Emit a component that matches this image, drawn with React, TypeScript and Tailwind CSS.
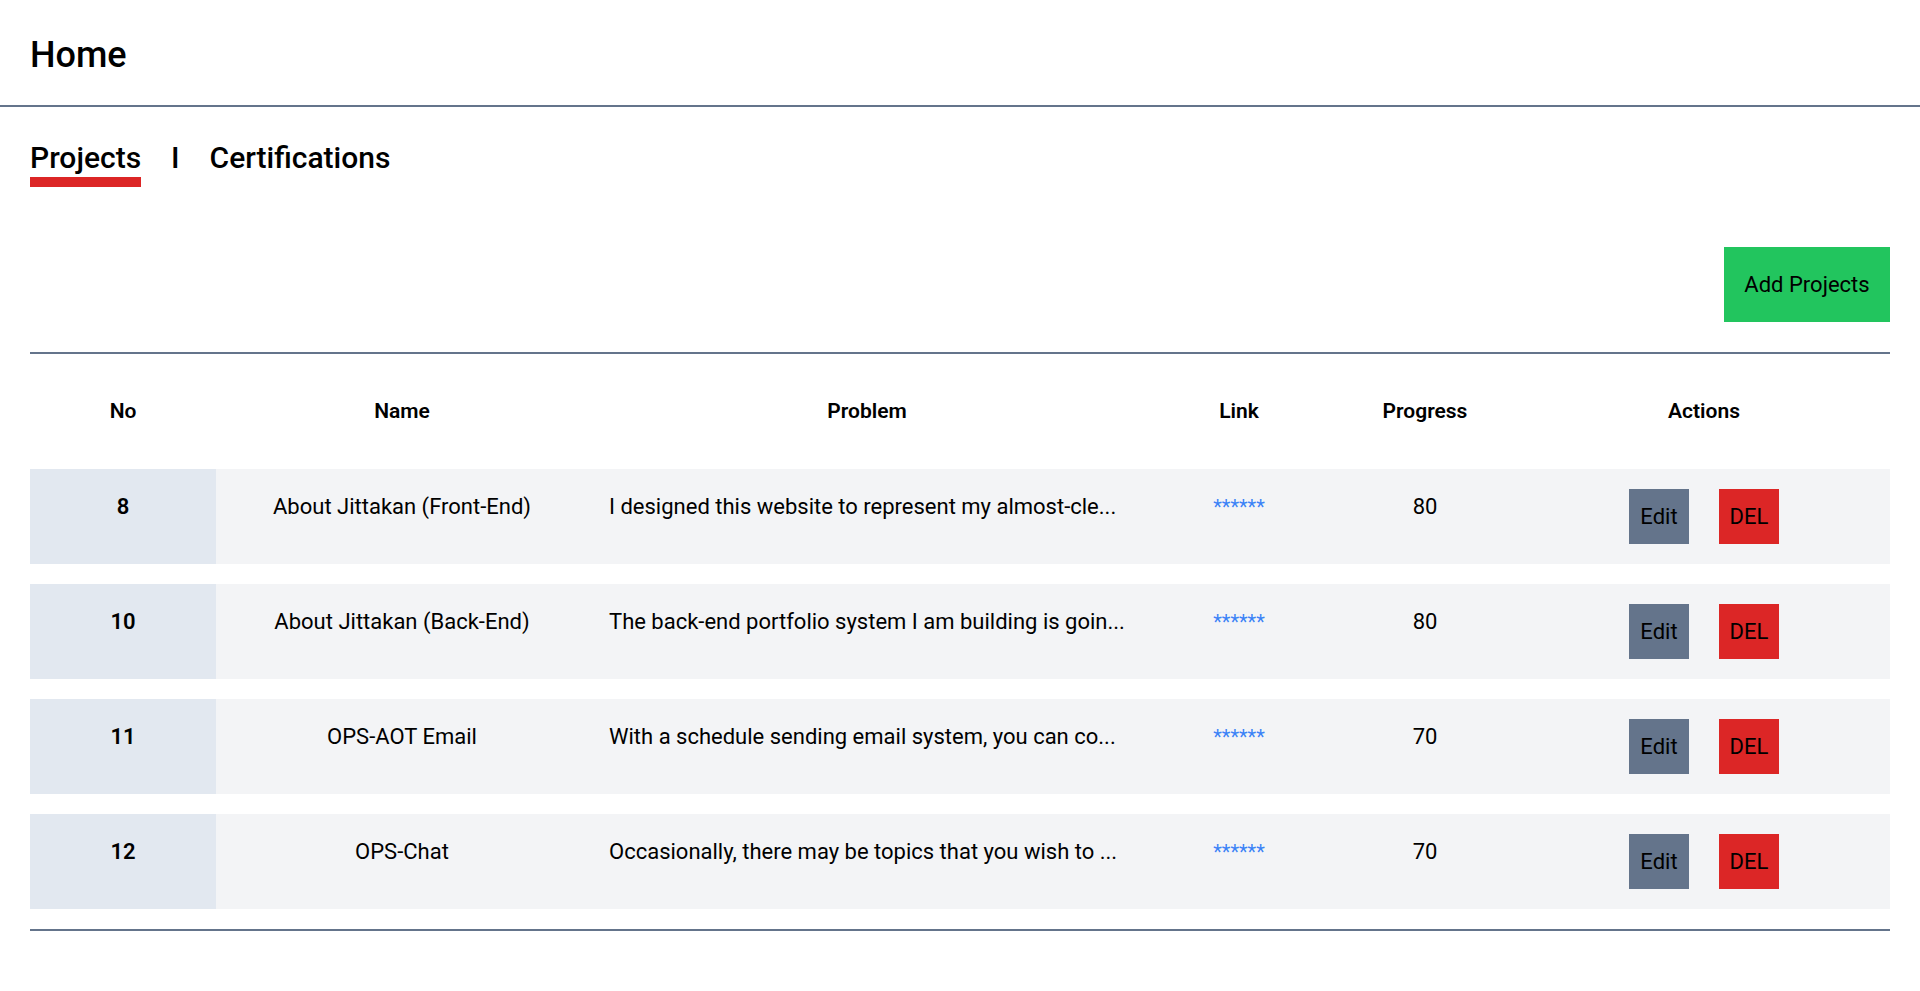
import { useState } from "react";

type Project = {
    id: number
    name: string
    problem: string
    progress: number
}

const projects: Project[] = [
    { id: 8, name: "About Jittakan (Front-End)", problem: "I designed this website to represent my almost-cle...", progress: 80 },
    { id: 10, name: "About Jittakan (Back-End)", problem: "The back-end portfolio system I am building is goin...", progress: 80 },
    { id: 11, name: "OPS-AOT Email", problem: "With a schedule sending email system, you can co...", progress: 70 },
    { id: 12, name: "OPS-Chat", problem: "Occasionally, there may be topics that you wish to ...", progress: 70 },
]

const cols = "grid grid-cols-[186px_372px_558px_186px_186px_372px]"

function App() {
    const [tab, setTab] = useState<"projects" | "certifications">("projects")

    return (
        <div className="min-h-screen bg-white text-black font-['Roboto',sans-serif]">
            <div className="h-[107px] flex items-center px-[30px] pt-[5px] border-b-2 border-[#64748b]">
                <h1 className="text-[36px] font-medium leading-none">Home</h1>
            </div>

            <div className="flex items-start gap-[30px] px-[30px] pt-[33px]">
                <button className="flex flex-col" onClick={() => setTab("projects")}>
                    <span className="text-[30px] font-medium leading-[36px]">Projects</span>
                    <span className={tab === "projects" ? "h-[10px] mt-[1px] bg-[#dc2626]" : "h-[10px] mt-[1px]"} />
                </button>
                <span className="text-[30px] font-medium leading-[36px]">I</span>
                <button className="flex flex-col" onClick={() => setTab("certifications")}>
                    <span className="text-[30px] font-medium leading-[36px]">Certifications</span>
                    <span className={tab === "certifications" ? "h-[10px] mt-[1px] bg-[#dc2626]" : "h-[10px] mt-[1px]"} />
                </button>
            </div>

            <div className="flex justify-end px-[30px] mt-[60px]">
                <button className="w-[166px] h-[75px] bg-[#22c55e] text-[22px]">
                    Add Projects
                </button>
            </div>

            <div className="mx-[30px] mt-[30px] border-y-2 border-[#64748b] pb-[20px]">
                <div className={cols + " h-[115px] items-center text-center text-[21px] font-semibold"}>
                    <div>No</div>
                    <div>Name</div>
                    <div>Problem</div>
                    <div>Link</div>
                    <div>Progress</div>
                    <div>Actions</div>
                </div>

                <div className="flex flex-col gap-[20px]">
                    {projects.map((p) => (
                        <div key={p.id} className={cols + " h-[95px] bg-[#f3f4f6] text-[22px] leading-[30px]"}>
                            <div className="bg-[#e2e8f0] text-center font-semibold pt-[23px]">{p.id}</div>
                            <div className="text-center pt-[23px]">{p.name}</div>
                            <div className="pl-[21px] pt-[23px] whitespace-nowrap overflow-hidden">{p.problem}</div>
                            <div className="text-center pt-[23px]">
                                <span className="text-[20px] text-[#3b82f6]">******</span>
                            </div>
                            <div className="text-center pt-[23px]">{p.progress}</div>
                            <div className="flex items-center justify-center gap-[30px]">
                                <button className="w-[60px] h-[55px] bg-[#64748b]">Edit</button>
                                <button className="w-[60px] h-[55px] bg-[#dc2626]">DEL</button>
                            </div>
                        </div>
                    ))}
                </div>
            </div>
        </div>
    )
}

export default App
